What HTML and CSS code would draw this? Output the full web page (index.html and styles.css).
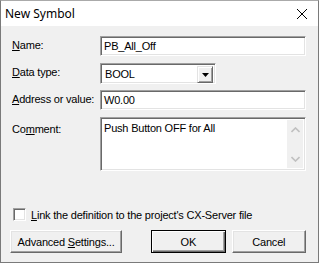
FILE: index.html
```html
<!DOCTYPE html>
<html lang="en">
<head>
    <meta charset="UTF-8">
    <title>New Symbol</title>
    <link rel="stylesheet" href="styles.css">
</head>
<body>

<div class="dialog">
    <div class="titlebar">
        <span class="title">New Symbol</span>
        <svg class="close" width="12" height="12" viewBox="0 0 12 12">
            <path d="M1 1 L11 11 M11 1 L1 11" stroke="#000" stroke-width="1" fill="none"/>
        </svg>
    </div>

    <div class="content">
        <div class="form">
            <label class="row-name"><u>N</u>ame:</label>
            <div class="field row-name">PB_All_Off</div>

            <label class="row-type"><u>D</u>ata type:</label>
            <div class="combo row-type">
                <span class="combo-text">BOOL</span>
                <span class="combo-btn">
                    <svg width="7" height="4" viewBox="0 0 7 4"><path d="M0 0 H7 L3.5 4 Z" fill="#000"/></svg>
                </span>
            </div>

            <label class="row-addr"><u>A</u>ddress or value:</label>
            <div class="field row-addr">W0.00</div>

            <label class="row-comment">Co<u>m</u>ment:</label>
            <div class="memo row-comment">
                <span class="memo-text">Push Button OFF for All</span>
                <div class="scrollbar">
                    <svg width="9" height="6" viewBox="0 0 9 6"><path d="M0.5 5 L4.5 1 L8.5 5" stroke="#c0c0c0" stroke-width="1.6" fill="none"/></svg>
                    <svg width="9" height="6" viewBox="0 0 9 6"><path d="M0.5 1 L4.5 5 L8.5 1" stroke="#c0c0c0" stroke-width="1.6" fill="none"/></svg>
                </div>
            </div>
        </div>

        <div class="check">
            <span class="box"></span>
            <span><u>L</u>ink the definition to the project's CX-Server file</span>
        </div>

        <div class="buttons">
            <div class="btn btn-adv"><span>Advanced <u>S</u>ettings...</span></div>
            <div class="btn btn-ok"><span>OK</span></div>
            <div class="btn btn-cancel"><span>Cancel</span></div>
        </div>
    </div>
</div>

</body>
</html>
```

FILE: styles.css
```css
* {
    box-sizing: border-box;
}
body {
    margin: 0;
    width: 319px;
    height: 263px;
    font-family: "Liberation Sans", Arial, sans-serif;
    font-size: 11px;
    letter-spacing: -0.2px;
    color: #000;
}
.dialog {
    width: 319px;
    height: 263px;
    background: #f0f0f0;
    border: 1px solid #7a7a7a;
    border-top-color: #aaaaaa;
    display: flex;
    flex-direction: column;
}
.titlebar {
    height: 25px;
    background: #fff;
    display: flex;
    align-items: center;
    justify-content: space-between;
    padding: 0 10px 0 4px;
}
.title {
    font-family: "Noto Sans", sans-serif;
    font-size: 12px;
    letter-spacing: 0;
    margin-top: -1px;
}
.close {
    margin-top: 1px;
}
.content {
    padding: 10px 12px 0 11px;
}
.form {
    display: grid;
    grid-template-columns: 88px 206px;
    grid-template-rows: 20px 20px 20px 54px;
    row-gap: 7px;
}
label {
    padding-top: 3px;
}
label.row-comment {
    padding-top: 6px;
}
.field, .combo, .memo, .box {
    background: #fff;
    border: 1px solid;
    border-color: #a0a0a0 #fff #fff #a0a0a0;
    box-shadow: inset 1px 1px #696969, inset -1px -1px #e3e3e3;
}
.field {
    padding: 3px 3px;
    white-space: nowrap;
}
.combo {
    width: 116px;
    height: 21px;
    display: flex;
    justify-content: space-between;
    padding: 2px;
}
.combo-text {
    padding: 2px 0 0 2px;
}
.combo-btn {
    width: 16px;
    height: 17px;
    background: #f0f0f0;
    border: 1px solid;
    border-color: #e3e3e3 #696969 #696969 #e3e3e3;
    box-shadow: inset 1px 1px #fff, inset -1px -1px #a0a0a0;
    display: flex;
    align-items: center;
    justify-content: center;
}
.memo {
    display: flex;
    justify-content: space-between;
    padding: 2px;
}
.memo-text {
    padding: 2px 0 0 1px;
}
.scrollbar {
    width: 16px;
    background: #f0f0f0;
    display: flex;
    flex-direction: column;
    justify-content: space-between;
    align-items: center;
    padding: 7px 0 6px;
}
.check {
    display: flex;
    align-items: center;
    margin-top: 37px;
    margin-left: 1px;
    gap: 5px;
}
.box {
    width: 13px;
    height: 13px;
}
.buttons {
    display: flex;
    margin-top: 9px;
    margin-left: -2px;
}
.btn {
    height: 23px;
    display: flex;
    align-items: center;
    justify-content: center;
    background: #f0f0f0;
    border: 1px solid;
    border-color: #fff #696969 #696969 #fff;
    box-shadow: inset -1px -1px #a0a0a0, inset 1px 1px #e3e3e3;
}
.btn-adv {
    width: 113px;
}
.btn-ok {
    width: 75px;
    margin-left: 29px;
    border-color: #000;
    box-shadow: inset 1px 1px #fff, inset -1px -1px #696969, inset -2px -2px #a0a0a0;
}
.btn-cancel {
    width: 75px;
    margin-left: 6px;
}
```
